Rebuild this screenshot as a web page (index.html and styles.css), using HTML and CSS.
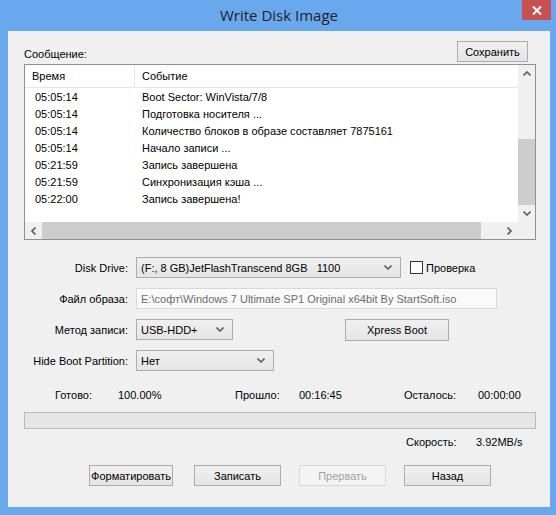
FILE: index.html
```html
<!DOCTYPE html>
<html lang="ru">
<head>
  <meta charset="UTF-8">
  <title>Write Disk Image</title>
  <link rel="stylesheet" href="styles.css">
</head>
<body>

<div class="window">
  <div class="titlebar">
    <span class="title">Write Disk Image</span>
    <div class="close">
      <svg width="10" height="9" viewBox="0 0 10 9"><path d="M1 0.5 L9 8.5 M9 0.5 L1 8.5" stroke="#fff" stroke-width="2"/></svg>
    </div>
  </div>

  <div class="client">
    <div class="log-head">
      <span class="log-label">Сообщение:</span>
      <div class="btn btn-save">Сохранить</div>
    </div>

    <div class="log">
      <div class="log-view">
        <div class="log-row log-cols">
          <div class="c-time">Время</div>
          <div class="c-event">Событие</div>
        </div>
        <div class="log-row"><div class="c-time">05:05:14</div><div class="c-event">Boot Sector: WinVista/7/8</div></div>
        <div class="log-row"><div class="c-time">05:05:14</div><div class="c-event">Подготовка носителя ...</div></div>
        <div class="log-row"><div class="c-time">05:05:14</div><div class="c-event">Количество блоков в образе составляет 7875161</div></div>
        <div class="log-row"><div class="c-time">05:05:14</div><div class="c-event">Начало записи ...</div></div>
        <div class="log-row"><div class="c-time">05:21:59</div><div class="c-event">Запись завершена</div></div>
        <div class="log-row"><div class="c-time">05:21:59</div><div class="c-event">Синхронизация кэша ...</div></div>
        <div class="log-row"><div class="c-time">05:22:00</div><div class="c-event">Запись завершена!</div></div>
      </div>

      <div class="vscroll">
        <div class="sb-arrow">
          <svg width="8" height="5" viewBox="0 0 8 5"><polyline points="0.5,4.5 4,1 7.5,4.5" fill="none" stroke="#606060" stroke-width="1.6"/></svg>
        </div>
        <div class="sb-track sb-track-v"><div class="sb-thumb-v"></div></div>
        <div class="sb-arrow">
          <svg width="8" height="5" viewBox="0 0 8 5"><polyline points="0.5,0.5 4,4 7.5,0.5" fill="none" stroke="#606060" stroke-width="1.6"/></svg>
        </div>
      </div>

      <div class="hscroll">
        <div class="sb-arrow">
          <svg width="5" height="8" viewBox="0 0 5 8"><polyline points="4.5,0.5 1,4 4.5,7.5" fill="none" stroke="#606060" stroke-width="1.6"/></svg>
        </div>
        <div class="sb-track sb-track-h"><div class="sb-thumb-h"></div></div>
        <div class="sb-arrow">
          <svg width="5" height="8" viewBox="0 0 5 8"><polyline points="0.5,0.5 4,4 0.5,7.5" fill="none" stroke="#606060" stroke-width="1.6"/></svg>
        </div>
      </div>

      <div class="sb-corner"></div>
    </div>

    <div class="form">
      <label class="f-label">Disk Drive:</label>
      <div class="f-field">
        <div class="combo combo-drive">
          <span>(F:, 8 GB)JetFlashTranscend 8GB &nbsp; 1100</span>
          <svg width="8" height="5" viewBox="0 0 8 5"><polyline points="0.5,0.5 4,4 7.5,0.5" fill="none" stroke="#606060" stroke-width="1.6"/></svg>
        </div>
        <div class="check"><span class="check-box"></span>Проверка</div>
      </div>

      <label class="f-label">Файл образа:</label>
      <div class="f-field">
        <div class="textbox">E:\софт\Windows 7 Ultimate SP1 Original x64bit By StartSoft.iso</div>
      </div>

      <label class="f-label">Метод записи:</label>
      <div class="f-field">
        <div class="combo combo-method">
          <span>USB-HDD+</span>
          <svg width="8" height="5" viewBox="0 0 8 5"><polyline points="0.5,0.5 4,4 7.5,0.5" fill="none" stroke="#606060" stroke-width="1.6"/></svg>
        </div>
        <div class="btn btn-xpress">Xpress Boot</div>
      </div>

      <label class="f-label">Hide Boot Partition:</label>
      <div class="f-field">
        <div class="combo combo-hide">
          <span>Нет</span>
          <svg width="8" height="5" viewBox="0 0 8 5"><polyline points="0.5,0.5 4,4 7.5,0.5" fill="none" stroke="#606060" stroke-width="1.6"/></svg>
        </div>
      </div>
    </div>

    <div class="stats">
      <span class="s-ready">Готово:</span>
      <span class="s-percent">100.00%</span>
      <span class="s-elapsed">Прошло:</span>
      <span class="s-elapsed-val">00:16:45</span>
      <span class="s-left">Осталось:</span>
      <span>00:00:00</span>
    </div>

    <div class="progress"></div>

    <div class="speed">
      <span class="s-speed">Скорость:</span>
      <span>3.92MB/s</span>
    </div>

    <div class="actions">
      <div class="btn btn-format">Форматировать</div>
      <div class="btn">Записать</div>
      <div class="btn btn-disabled">Прервать</div>
      <div class="btn">Назад</div>
    </div>
  </div>
</div>

</body>
</html>
```

FILE: styles.css
```css
* {
  box-sizing: border-box;
}
html, body {
  margin: 0;
}
body {
  width: 556px;
  height: 515px;
  overflow: hidden;
  background: #6aa8ee;
  font-family: "Liberation Sans", Arial, sans-serif;
  font-size: 11px;
  color: #000;
}
.window {
  position: relative;
  height: 515px;
  padding: 0 6px 8px 8px;
  display: flex;
  flex-direction: column;
}
.titlebar {
  height: 31px;
  display: flex;
  align-items: center;
  justify-content: center;
}
.title {
  font-family: "Open Sans", "Noto Sans", sans-serif;
  font-size: 15px;
  color: #1e1e1e;
  margin-top: -1px;
}
.close {
  position: absolute;
  top: 0;
  right: 5px;
  width: 29px;
  height: 20px;
  background: #c75050;
  display: flex;
  align-items: center;
  justify-content: center;
}
.client {
  flex: 1;
  background: #f0f0f0;
  padding: 10px 14px 0 16px;
}

/* buttons */
.btn {
  height: 21px;
  border: 1px solid #acacac;
  background: linear-gradient(#f0f0f0, #e5e5e5);
  display: flex;
  align-items: center;
  justify-content: center;
  white-space: nowrap;
}
.btn-disabled {
  border-color: #d9d9d9;
  background: #f4f4f4;
  color: #a0a0a0;
}

/* log header */
.log-head {
  height: 21px;
  margin-bottom: 2px;
  display: flex;
  align-items: flex-end;
  justify-content: space-between;
}
.log-label {
  padding-bottom: 2px;
}
.btn-save {
  width: 71px;
  margin-right: 8px;
}

/* log list */
.log {
  height: 176px;
  border: 1px solid #8f8f8f;
  background: #fff;
  display: grid;
  grid-template-columns: 1fr 17px;
  grid-template-rows: 1fr 17px;
}
.log-view {
  overflow: hidden;
}
.log-row {
  display: flex;
  height: 17px;
  align-items: center;
  white-space: nowrap;
}
.log-cols {
  height: 23px;
  border-bottom: 1px solid #e5e5e5;
}
.c-time {
  width: 110px;
  padding-left: 10px;
}
.c-event {
  padding-left: 7px;
}
.log-cols .c-time {
  height: 100%;
  padding-left: 7px;
  display: flex;
  align-items: center;
  border-right: 1px solid #e5e5e5;
}

/* scrollbars */
.vscroll {
  background: #f0f0f0;
  display: flex;
  flex-direction: column;
}
.hscroll {
  background: #f0f0f0;
  display: flex;
}
.sb-arrow {
  width: 17px;
  height: 17px;
  flex-shrink: 0;
  display: flex;
  align-items: center;
  justify-content: center;
}
.sb-track {
  flex: 1;
  display: flex;
}
.sb-track-v {
  flex-direction: column;
  justify-content: flex-end;
}
.sb-thumb-v {
  height: 66px;
  background: #cdcdcd;
}
.sb-thumb-h {
  width: 439px;
  background: #cdcdcd;
}
.sb-corner {
  background: #f0f0f0;
}

/* settings */
.form {
  margin-top: 17px;
  display: grid;
  grid-template-columns: 104px 1fr;
  grid-auto-rows: 21px;
  column-gap: 8px;
  row-gap: 10px;
}
.f-label {
  text-align: right;
  align-self: center;
}
.f-field {
  display: flex;
  align-items: center;
}
.combo {
  height: 21px;
  border: 1px solid #acacac;
  background: linear-gradient(#f0f0f0, #e5e5e5);
  display: flex;
  align-items: center;
  justify-content: space-between;
  padding: 0 8px 0 4px;
  white-space: nowrap;
}
.combo-drive {
  width: 265px;
}
.combo-method {
  width: 97px;
}
.combo-hide {
  width: 138px;
}
.check {
  display: flex;
  align-items: center;
  margin-left: 9px;
}
.check-box {
  width: 13px;
  height: 13px;
  border: 1px solid #333;
  background: #fff;
  margin-right: 3px;
}
.textbox {
  width: 361px;
  height: 21px;
  border: 1px solid #d9d9d9;
  background: #fafafa;
  color: #6d6d6d;
  padding-left: 4px;
  display: flex;
  align-items: center;
  white-space: nowrap;
}
.btn-xpress {
  width: 104px;
  height: 22px;
  margin-left: 112px;
}

/* status */
.stats {
  margin-top: 16px;
  height: 16px;
  padding-left: 31px;
  display: flex;
  align-items: center;
}
.s-ready { width: 63px; }
.s-percent { width: 117px; }
.s-elapsed { width: 64px; }
.s-elapsed-val { width: 105px; }
.s-left { width: 74px; }
.progress {
  margin-top: 9px;
  height: 17px;
  border: 1px solid #bcbcbc;
  background: #e6e6e6;
}
.speed {
  margin-top: 5px;
  height: 16px;
  padding-left: 382px;
  display: flex;
  align-items: center;
}
.s-speed { width: 70px; }
.actions {
  margin-top: 15px;
  padding-left: 65px;
  display: flex;
  gap: 18px;
}
.actions .btn {
  width: 87px;
}
.actions .btn-format {
  width: 84px;
  margin-right: 3px;
}
```
